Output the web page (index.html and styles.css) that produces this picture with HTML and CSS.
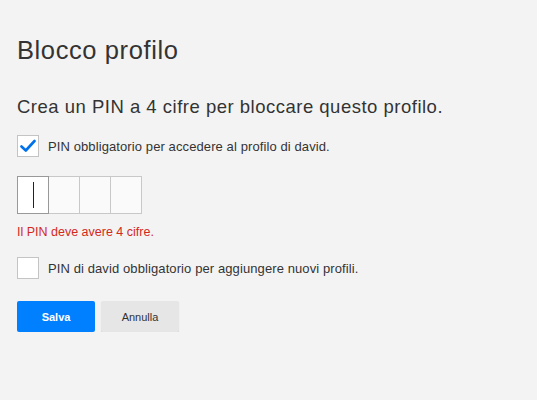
FILE: index.html
```html
<!DOCTYPE html>
<html lang="it">

<head>
    <meta charset="UTF-8">
    <meta name="viewport" content="width=device-width, initial-scale=1.0">
    <title>Blocco profilo</title>
    <link rel="stylesheet" href="styles.css">
</head>

<body>

    <div class="container">
        <h1>Blocco profilo</h1>
        <h2>Crea un PIN a 4 cifre per bloccare questo profilo.</h2>

        <label class="check-row">
            <span class="check-box checked">
                <svg width="16" height="14" viewBox="0 0 16 14">
                    <path d="M1.5 7.5 L5.8 11.5 L14.5 2" fill="none" stroke="#0071eb" stroke-width="2.6" stroke-linecap="round" stroke-linejoin="round" />
                </svg>
            </span>
            <span class="check-label">PIN obbligatorio per accedere al profilo di david.</span>
        </label>

        <div class="pin-group">
            <div class="pin-cell focused"><span class="caret"></span></div>
            <div class="pin-cell"></div>
            <div class="pin-cell"></div>
            <div class="pin-cell"></div>
        </div>

        <p class="pin-error">Il PIN deve avere 4 cifre.</p>

        <label class="check-row second">
            <span class="check-box"></span>
            <span class="check-label">PIN di david obbligatorio per aggiungere nuovi profili.</span>
        </label>

        <div class="actions">
            <button class="btn btn-save">Salva</button>
            <button class="btn btn-cancel">Annulla</button>
        </div>
    </div>

</body>

</html>
```

FILE: styles.css
```css
body {
    margin: 0;
    padding: 0;
    background-color: #f3f3f3;
    font-family: "Liberation Sans", Arial, sans-serif;
    color: #333;
}

.container {
    padding: 35px 17px 0;
}

h1 {
    margin: 0;
    font-size: 25.5px;
    line-height: 30px;
    font-weight: normal;
    letter-spacing: 0.6px;
    color: #333;
}

h2 {
    margin: 30px 0 0;
    font-size: 18.5px;
    line-height: 24px;
    font-weight: normal;
    letter-spacing: 0.5px;
    color: #333;
}

.check-row {
    display: flex;
    align-items: center;
    gap: 9px;
    margin-top: 16px;
}

.check-row.second {
    margin-top: 17px;
}

.check-box {
    width: 20px;
    height: 20px;
    background-color: #fff;
    border: 1px solid #c4c4c4;
    display: flex;
    align-items: center;
    justify-content: center;
}

.check-label {
    font-size: 13px;
    letter-spacing: 0.1px;
    color: #333;
}

.pin-group {
    display: flex;
    margin-top: 19px;
}

.pin-cell {
    width: 15px;
    height: 36px;
    padding-left: 15px;
    border: 1px solid #c8c8c8;
    margin-left: -1px;
    background-color: #fafafa;
    display: flex;
    align-items: center;
}

.pin-cell:first-child {
    margin-left: 0;
}

.pin-cell.focused {
    background-color: #fff;
    border-color: #999;
    position: relative;
    z-index: 1;
}

.caret {
    width: 1px;
    height: 26px;
    background-color: #222;
}

.pin-error {
    margin: 10px 0 0;
    font-size: 12.5px;
    line-height: 16px;
    color: #d3291c;
}

.actions {
    display: flex;
    gap: 6px;
    margin-top: 22px;
}

.btn {
    width: 78px;
    height: 31px;
    border: none;
    border-radius: 2px;
    font-family: "Liberation Sans", Arial, sans-serif;
    font-size: 11px;
    cursor: pointer;
}

.btn-save {
    background-color: #0080ff;
    color: #fff;
    font-weight: bold;
}

.btn-cancel {
    background-color: #e6e6e6;
    color: #333;
    box-shadow: 0 1px 1px rgba(0, 0, 0, 0.15);
}
```
